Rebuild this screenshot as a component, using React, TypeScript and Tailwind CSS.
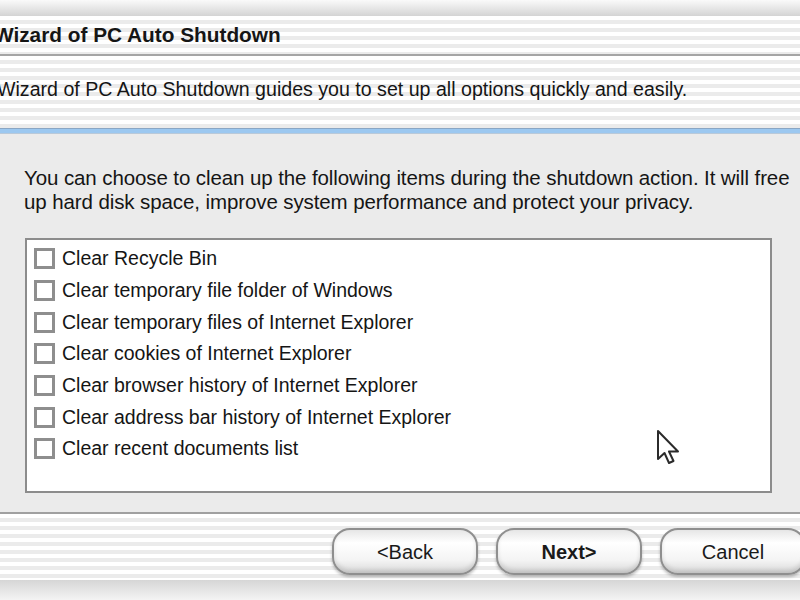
const items = [
  "Clear Recycle Bin",
  "Clear temporary file folder of Windows",
  "Clear temporary files of Internet Explorer",
  "Clear cookies of Internet Explorer",
  "Clear browser history of Internet Explorer",
  "Clear address bar history of Internet Explorer",
  "Clear recent documents list",
]

const stripes =
  "bg-[image:repeating-linear-gradient(180deg,#ffffff_0px,#ffffff_4px,#ebebeb_4px,#ebebeb_8px)]"

const Pill = ({ label, bold }: { label: string; bold?: boolean }) => (
  <button
    className={
      "w-[146px] h-[47px] shrink-0 rounded-[18px] border-2 border-[#8f8f8f] bg-[image:linear-gradient(180deg,#e6e6e6_0%,#ffffff_30%,#f4f4f4_70%,#d9d9d9_100%)] shadow-[0_2px_3px_rgba(0,0,0,0.25),inset_0_-3px_4px_rgba(0,0,0,0.12)] text-[20px] text-[#1a1a1a] " +
      (bold ? "font-bold text-[19px]" : "")
    }
  >
    {label}
  </button>
)

export default function App() {
  return (
    <div className="w-[800px] h-[600px] overflow-hidden flex flex-col bg-[#ebebeb] font-['Liberation_Sans',Arial,sans-serif] text-[#151515]">
      <div className="h-[16px] shrink-0 bg-[image:linear-gradient(180deg,#fafafa,#d4d4d4)]" />
      <div className={"h-[40px] shrink-0 flex items-center border-b-2 border-[#a5a5a5] " + stripes}>
        <span className="ml-[-6px] text-[20.8px] font-bold leading-none">Wizard of PC Auto Shutdown</span>
      </div>
      <div className={"h-[72px] shrink-0 flex items-center " + stripes}>
        <span className="ml-[-3px] mt-[-4px] text-[19.6px] leading-none">
          Wizard of PC Auto Shutdown guides you to set up all options quickly and easily.
        </span>
      </div>
      <div className="h-[6px] shrink-0 border-t border-[#8aa6c4] bg-[#9cc8f0] border-b border-b-[#b9c9d9]" />
      <div className="flex-1 flex flex-col px-[24px] pt-[32px]">
        <p className="text-[20.5px] leading-[24px] tracking-[-0.1px] whitespace-nowrap">
          You can choose to clean up the following items during the shutdown action. It will free
          <br />
          up hard disk space, improve system performance and protect your privacy.
        </p>
        <div className="relative mt-[24px] ml-[1px] w-[747px] h-[255px] bg-white border-2 border-[#8c8c8c] flex flex-col pt-[3px] pl-[7px]">
          {items.map((t) => (
            <label key={t} className="h-[31.7px] flex items-center gap-[7px] text-[19.5px]">
              <span className="w-[21px] h-[21px] shrink-0 border-[3px] border-[#8e8e8e] bg-white" />
              {t}
            </label>
          ))}
          <svg className="absolute left-[629px] top-[189px]" width="26" height="38" viewBox="0 0 26 38">
            <path
              d="M2 2 L2 30 L8.5 24 L13 34 L17.5 32 L13 22.5 L22 22.5 Z"
              fill="#ffffff"
              stroke="#2b2b2b"
              strokeWidth="2"
              strokeLinejoin="round"
            />
          </svg>
        </div>
      </div>
      <div className={"h-[68px] shrink-0 border-t-2 border-[#a0a0a0] flex items-start justify-end gap-[18px] pt-[14px] mr-[-6px] " + stripes}>
        <Pill label="<Back" />
        <Pill label="Next>" bold />
        <Pill label="Cancel" />
      </div>
      <div className="h-[20px] shrink-0 bg-[image:linear-gradient(180deg,#d6d6d6,#f4f4f4)]" />
    </div>
  )
}
